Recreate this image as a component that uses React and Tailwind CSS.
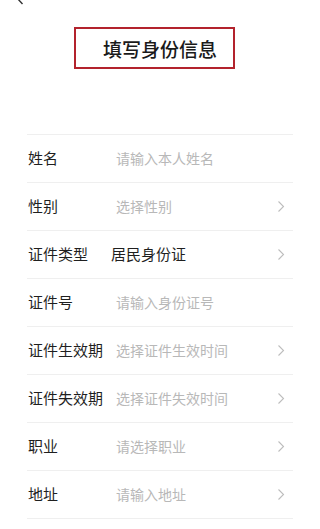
import React from "react";

const rows = [
  { label: "姓名", value: "请输入本人姓名", placeholder: true, arrow: false },
  { label: "性别", value: "选择性别", placeholder: true, arrow: true },
  { label: "证件类型", value: "居民身份证", placeholder: false, arrow: true },
  { label: "证件号", value: "请输入身份证号", placeholder: true, arrow: false },
  { label: "证件生效期", value: "选择证件生效时间", placeholder: true, arrow: true },
  { label: "证件失效期", value: "选择证件失效时间", placeholder: true, arrow: true },
  { label: "职业", value: "请选择职业", placeholder: true, arrow: true },
  { label: "地址", value: "请输入地址", placeholder: true, arrow: true },
];

const Chevron = () => (
  <svg width="8" height="13" viewBox="0 0 8 13" fill="none" className="shrink-0">
    <path d="M1.5 1.5 L6.5 6.5 L1.5 11.5" stroke="#bdbdbd" strokeWidth="1.1" />
  </svg>
);

export default function App() {
  return (
    <div
      className="w-[320px] h-[529px] bg-white overflow-hidden relative"
      style={{ fontFamily: '"Noto Sans CJK SC", "Noto Sans", sans-serif' }}
    >
      {/* back arrow, mostly scrolled off the top */}
      <svg width="10" height="14" viewBox="0 0 10 14" fill="none" className="absolute left-[15px] top-[-9px]">
        <path d="M7.5 1 L2 7 L7.5 13" stroke="#333" strokeWidth="1.4" />
      </svg>

      {/* Title */}
      <div className="pt-[27px]">
        <div className="ml-[74px] w-[161px] h-[42px] border-2 border-[#b3232d] flex items-center pl-[27px]">
          <h1 className="text-[19px] font-medium text-[#1a1a1a] tracking-[0px] leading-none">填写身份信息</h1>
        </div>
      </div>

      {/* Form */}
      <div className="mt-[65px] mx-[27px] border-t border-[#efefef]">
        {rows.map((r) => (
          <div key={r.label} className="h-[48px] border-b border-[#efefef] flex items-center">
            <span className="w-[84px] pl-[1px] text-[15px] text-[#1f1f1f] shrink-0">{r.label}</span>
            <span
              className={
                r.placeholder
                  ? "flex-1 pl-[5px] text-[14px] text-[#b8b8b8]"
                  : "flex-1 text-[15px] text-[#1f1f1f]"
              }
            >
              {r.value}
            </span>
            {r.arrow && (
              <div className="pr-[8px]">
                <Chevron />
              </div>
            )}
          </div>
        ))}
      </div>
    </div>
  );
}
